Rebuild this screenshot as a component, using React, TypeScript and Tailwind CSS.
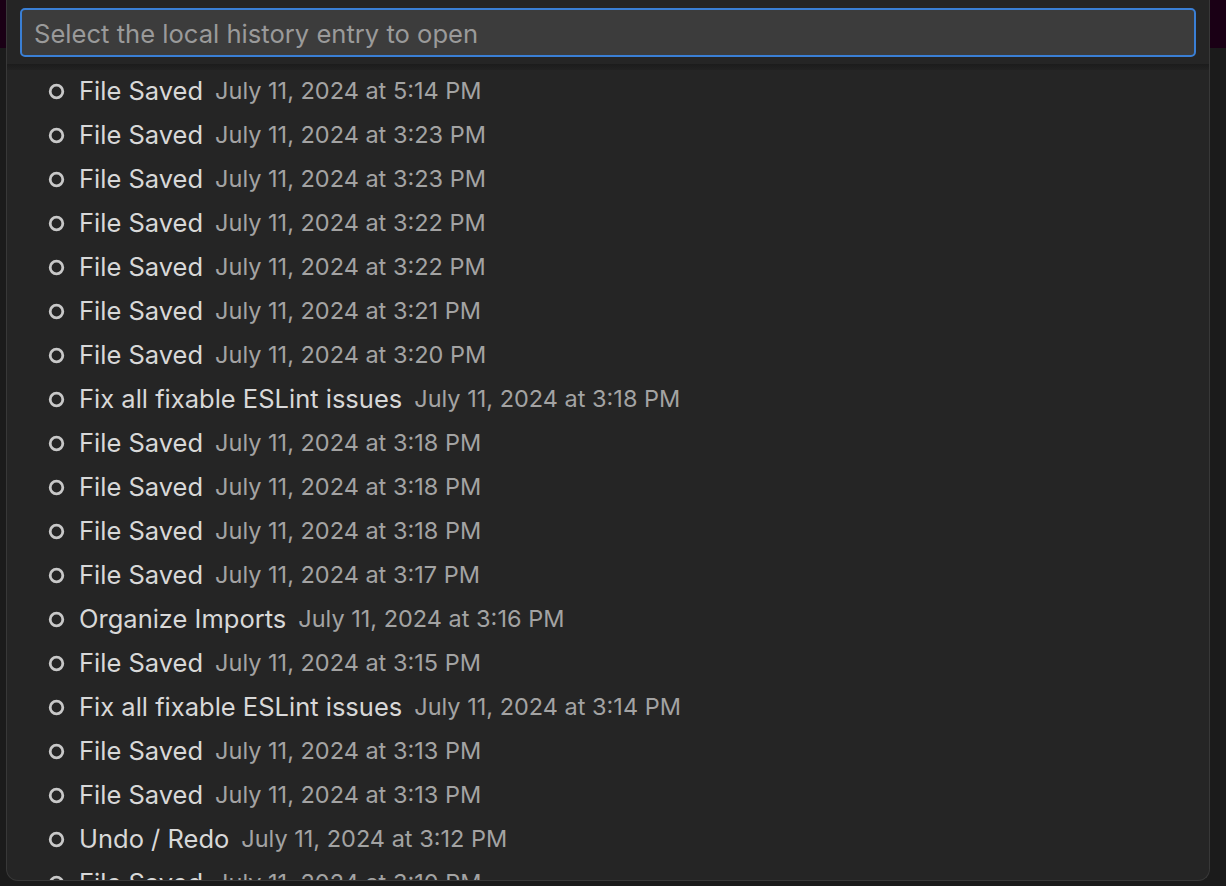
import React from "react";

type Entry = { label: string; time: string };

const entries: Entry[] = [
  { label: "File Saved", time: "5:14 PM" },
  { label: "File Saved", time: "3:23 PM" },
  { label: "File Saved", time: "3:23 PM" },
  { label: "File Saved", time: "3:22 PM" },
  { label: "File Saved", time: "3:22 PM" },
  { label: "File Saved", time: "3:21 PM" },
  { label: "File Saved", time: "3:20 PM" },
  { label: "Fix all fixable ESLint issues", time: "3:18 PM" },
  { label: "File Saved", time: "3:18 PM" },
  { label: "File Saved", time: "3:18 PM" },
  { label: "File Saved", time: "3:18 PM" },
  { label: "File Saved", time: "3:17 PM" },
  { label: "Organize Imports", time: "3:16 PM" },
  { label: "File Saved", time: "3:15 PM" },
  { label: "Fix all fixable ESLint issues", time: "3:14 PM" },
  { label: "File Saved", time: "3:13 PM" },
  { label: "File Saved", time: "3:13 PM" },
  { label: "Undo / Redo", time: "3:12 PM" },
  { label: "File Saved", time: "3:10 PM" },
];

function CircleIcon() {
  return (
    <svg width="17" height="17" viewBox="0 0 17 17" className="shrink-0">
      <circle cx="8.5" cy="8.5" r="6.3" fill="none" stroke="#c8c8c8" strokeWidth="2.8" />
    </svg>
  );
}

export default function App() {
  return (
    <div
      className="relative w-[1226px] h-[886px] overflow-hidden bg-[#1b1b1b]"
      style={{ fontFamily: "Inter, 'Noto Sans', sans-serif" }}
    >
      {/* editor title strip behind the widget */}
      <div className="absolute top-0 left-0 right-0 h-[48px] bg-[#1a0015]" />

      <div className="relative ml-[6px] w-[1204px] h-[881px] bg-[#252525] border border-t-0 border-[#383838] rounded-b-[12px] overflow-hidden">
        <div className="px-[13px] pt-[8px] pb-[7px]">
          <div className="h-[49px] bg-[#3c3c3c] border-2 border-[#3a7fd5] rounded-[5px] flex items-center px-[12px] pt-[3px]">
            <span className="text-[25.6px] text-[#9a9a9a]">
              Select the local history entry to open
            </span>
          </div>
        </div>
        <div className="h-[6px] bg-gradient-to-b from-[#1c1c1c] to-[#222222]" />

        <div className="-mt-px">
          {entries.map((e, i) => (
            <div key={i} className="h-[44px] flex items-center pl-[41px]">
              <CircleIcon />
              <span className="ml-[14px] text-[25.5px] text-[#d8d8d8] whitespace-nowrap">
                {e.label}
              </span>
              <span className="ml-[12px] text-[23.5px] text-[#a3a3a3] whitespace-nowrap">
                July 11, 2024 at {e.time}
              </span>
            </div>
          ))}
        </div>
      </div>
    </div>
  );
}
